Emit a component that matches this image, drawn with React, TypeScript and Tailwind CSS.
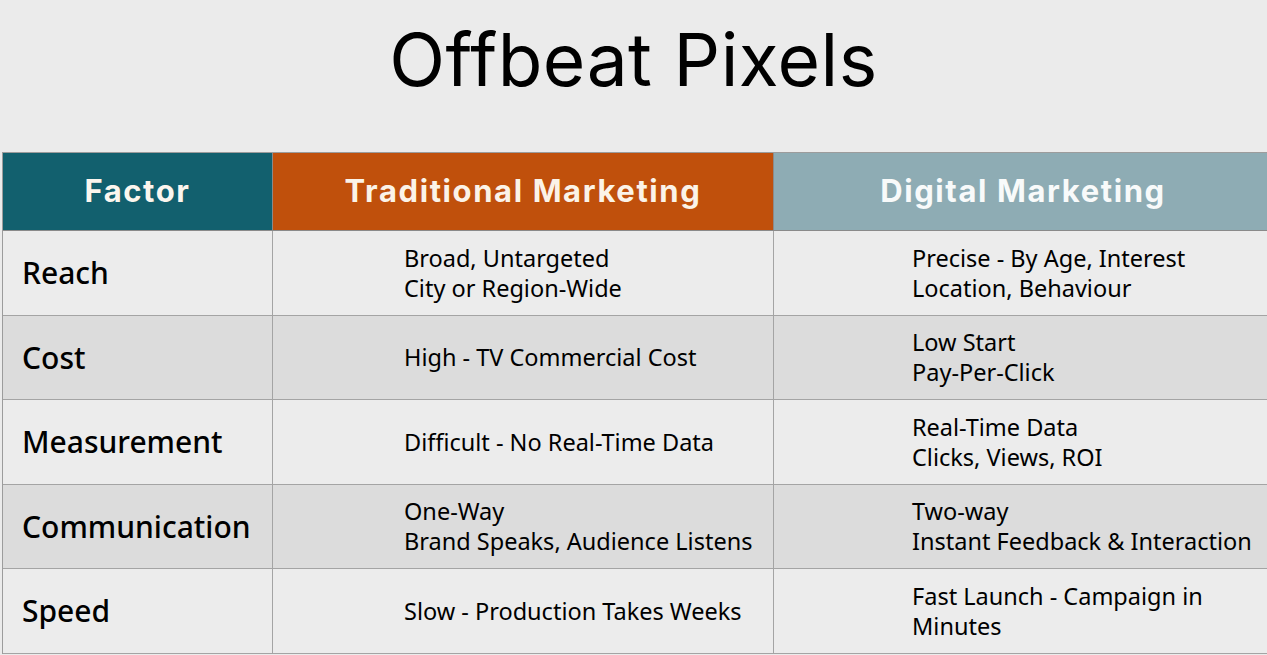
const rows = [
  { factor: "Reach", trad: ["Broad, Untargeted", "City or Region-Wide"], digital: ["Precise - By Age, Interest", "Location, Behaviour"] },
  { factor: "Cost", trad: ["High - TV Commercial Cost"], digital: ["Low Start", "Pay-Per-Click"] },
  { factor: "Measurement", trad: ["Difficult - No Real-Time Data"], digital: ["Real-Time Data", "Clicks, Views, ROI"] },
  { factor: "Communication", trad: ["One-Way", "Brand Speaks, Audience Listens"], digital: ["Two-way", "Instant Feedback & Interaction"] },
  { factor: "Speed", trad: ["Slow - Production Takes Weeks"], digital: ["Fast Launch - Campaign in", "Minutes"] },
];

const App = () => {
  return (
    <div className="w-[1267px] h-[655px] bg-[#ebebeb] overflow-hidden font-['Noto_Sans',sans-serif] text-black">
      <h1 className="h-[152px] pb-[32px] flex items-center justify-center font-['Inter',sans-serif] font-normal text-[73px] tracking-[0.5px]">
        Offbeat Pixels
      </h1>
      <div className="ml-[2px] w-[1270px] grid grid-cols-[270px_501px_499px] border-t border-l border-[#9c9c9c]">
        <div className="h-[78px] bg-[#12606e] flex items-center justify-center text-[#fbf6ee] font-['Inter',sans-serif] font-bold text-[31px] tracking-[1.6px] border-r border-b border-[#8a8a8a]">
          Factor
        </div>
        <div className="h-[78px] bg-[#c0500c] flex items-center justify-center text-[#fbf3e8] font-['Inter',sans-serif] font-bold text-[31px] tracking-[1.6px] border-r border-b border-[#8a8a8a]">
          Traditional Marketing
        </div>
        <div className="h-[78px] bg-[#8eacb4] flex items-center justify-center text-[#f8fafa] font-['Inter',sans-serif] font-bold text-[31px] tracking-[1.6px] border-r border-b border-[#8a8a8a]">
          Digital Marketing
        </div>
        {rows.map((row, i) => {
          const bg = i % 2 === 0 ? "bg-[#ececec]" : "bg-[#dcdcdc]";
          return [
            <div key={row.factor + "f"} className={`h-[84.5px] ${bg} flex items-center pl-[19px] text-[30px] font-medium border-r border-b border-[#a4a4a4]`}>
              {row.factor}
            </div>,
            <div key={row.factor + "t"} className={`h-[84.5px] ${bg} flex flex-col justify-center pl-[131px] text-[23.5px] leading-[30px] border-r border-b border-[#a4a4a4]`}>
              {row.trad.map((l) => (
                <span key={l}>{l}</span>
              ))}
            </div>,
            <div key={row.factor + "d"} className={`h-[84.5px] ${bg} flex flex-col justify-center pl-[138px] text-[23.5px] leading-[30px] border-r border-b border-[#a4a4a4]`}>
              {row.digital.map((l) => (
                <span key={l}>{l}</span>
              ))}
            </div>,
          ];
        })}
      </div>
    </div>
  );
};

export default App;
